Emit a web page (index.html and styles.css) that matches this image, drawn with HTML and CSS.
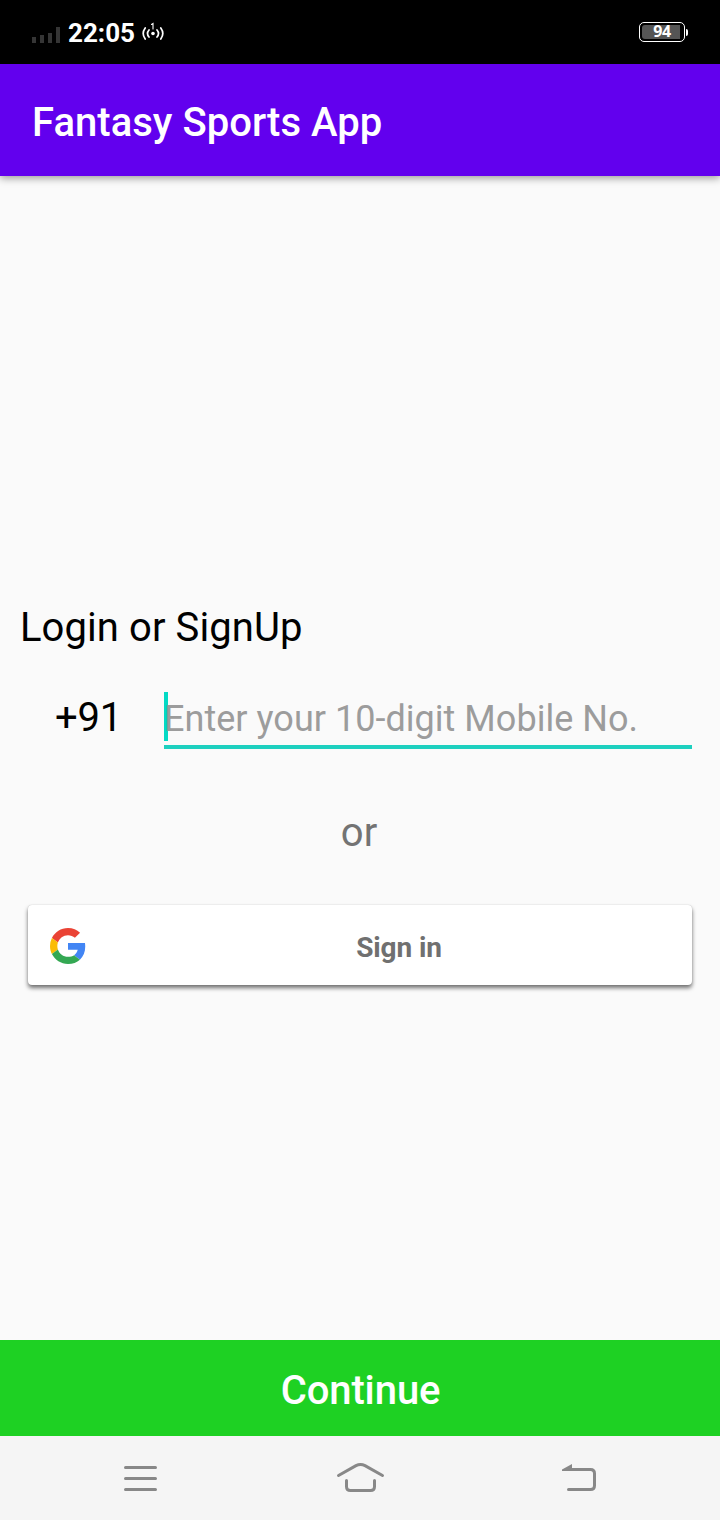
FILE: index.html
```html
<!DOCTYPE html>
<html lang="en">
<head>
<meta charset="utf-8">
<title>Fantasy Sports App</title>
<link rel="stylesheet" href="styles.css">
</head>
<body>
<div class="screen">
  <div class="status">
    <svg class="signal" width="28" height="16" viewBox="0 0 28 16" fill="#353535"><path d="M0 10h4v6H0zM8 8h4v8H8zM16 6h4v10h-4zM24 0h4v16h-4z"/></svg>
    <span class="time">22:05</span>
    <svg class="hotspot" width="22" height="20" viewBox="0 0 22 20" fill="none" stroke="#fff" stroke-width="1.700" stroke-linecap="round"><path d="M3.200 6Q-.8 11.500 3.200 17M7 8Q4 11.500 7 15M18.800 6Q22.800 11.500 18.800 17M15 8Q18 11.500 15 15"/><path d="M9.500 2.500l1.500-1v5.500" stroke-width="1.100"/><circle cx="11" cy="11.500" r="1.800" fill="#fff" stroke="none"/></svg>
    <div class="battery"><span class="charge">94</span></div>
  </div>
  <header class="appbar">Fantasy Sports App</header>
  <main class="content">
    <h1 class="heading">Login or SignUp</h1>
    <div class="phone">
      <span class="code">+91</span>
      <div class="field"><span class="caret"></span><span class="hint">Enter your 10-digit Mobile No.</span></div>
    </div>
    <div class="or">or</div>
    <div class="signin">
      <svg class="google" width="36" height="36" viewBox="0 0 48 48"><path fill="#EA4335" d="M24 9.500c3.540 0 6.710 1.220 9.210 3.600l6.850-6.850C35.900 2.380 30.470 0 24 0 14.620 0 6.510 5.380 2.560 13.220l7.980 6.190C12.430 13.720 17.740 9.500 24 9.500z"/><path fill="#4285F4" d="M46.980 24.550c0-1.570-.15-3.090-.38-4.550H24v9.020h12.940c-.58 2.960-2.260 5.480-4.780 7.180l7.730 6c4.510-4.180 7.090-10.360 7.090-17.650z"/><path fill="#FBBC05" d="M10.530 28.590A14.500 14.500 0 0 1 9.770 24c0-1.600.27-3.140.76-4.590l-7.980-6.190A23.900 23.900 0 0 0 0 24c0 3.880.92 7.540 2.560 10.780z"/><path fill="#34A853" d="M24 48c6.480 0 11.930-2.130 15.890-5.810l-7.730-6c-2.150 1.450-4.920 2.300-8.160 2.300-6.260 0-11.570-4.220-13.470-9.910l-7.980 6.190C6.510 42.620 14.620 48 24 48z"/></svg>
      <span class="signin-label">Sign in</span>
    </div>
  </main>
  <div class="continue">Continue</div>
  <nav class="navbar">
    <svg width="80" height="60" viewBox="0 0 80 60"><path d="M25.500 17.500h30M25.500 28.500h30M25.500 39.500h30"/></svg>
    <svg width="80" height="60" viewBox="0 0 80 60"><path d="M18.500 25.500L36 15.600Q40.500 13.300 45 15.600L62.500 25.500M26.500 30.500V36.500Q26.500 40.500 30.500 40.500H50.500Q54.500 40.500 54.500 36.500V30.500"/></svg>
    <svg width="80" height="60" viewBox="0 0 80 60"><path d="M28.500 39.500H50.500Q54.500 39.500 54.500 35.500V23.500Q54.500 19.500 50.500 19.500H26"/><path class="tip" d="M22 19.500L32 14V21H22z"/></svg>
  </nav>
</div>
</body>
</html>
```
FILE: styles.css
```css
* { box-sizing: border-box; }
body { margin: 0; font-family: Roboto, "Liberation Sans", sans-serif; background: #fafafa; }
.screen { display: flex; flex-direction: column; width: 720px; height: 1520px; overflow: hidden; }
.status { display: flex; height: 64px; padding: 0 32px; background: #000; color: #fff; }
.signal { margin-top: 27px; }
.time { margin: 18px 0 0 8px; font-size: 26px; line-height: 30px; font-weight: 700; }
.hotspot { margin: 22px 0 0 7px; }
.battery { width: 46px; height: 20px; margin: 22px 3px 0 auto; padding: 2px; border: 1px solid #fff; border-radius: 5px; position: relative; }
.battery::after { content: ""; position: absolute; left: 46px; top: 6px; width: 2px; height: 7px; background: #fff; border-radius: 0 2px 2px 0; }
.charge { display: block; width: 38px; height: 14px; padding-left: 2px; border-radius: 3px 0 0 3px; background: #555; font: 700 16px/12px "Noto Sans", sans-serif; letter-spacing: -.4px; text-align: center; }
.appbar { height: 112px; flex: none; padding: 3px 32px 0; background: #6200ee; color: #fff; font-size: 40px; line-height: 112px; font-weight: 500; letter-spacing: .03px; box-shadow: 0 2px 8px rgba(0,0,0,.4); z-index: 1; }
.content { flex: 1; padding: 428px 28px 0; }
.heading { margin: 0 0 0 -8px; font-size: 40px; line-height: 48px; font-weight: 400; letter-spacing: .08px; color: #000; }
.phone { display: flex; margin-top: 40px; height: 57px; }
.code { width: 136px; padding-left: 27px; font-size: 40px; line-height: 52px; letter-spacing: -.2px; color: #000; }
.field { flex: 1; display: flex; height: 57px; border-bottom: 4px solid #1dd0bf; }
.caret { width: 4px; height: 49px; background: #03dac5; }
.hint { margin-left: -4px; font-size: 36px; line-height: 54px; letter-spacing: .03px; color: #9c9c9c; white-space: nowrap; }
.or { margin-top: 60px; height: 48px; padding-right: 2px; font-size: 40px; line-height: 48px; text-align: center; color: #737373; }
.signin { display: flex; align-items: center; height: 80px; margin-top: 48px; padding-left: 22px; background: #fff; border-radius: 4px; box-shadow: 0 3px 4px rgba(0,0,0,.55), 0 0 1px rgba(0,0,0,.25); }
.google { margin-top: 2px; }
.signin-label { flex: 1; padding: 4px 0 0 20px; text-align: center; font-size: 28px; font-weight: 700; letter-spacing: -.1px; color: #707070; }
.continue { height: 96px; padding: 3px 0 0 1px; background: #1ed123; color: #fff; font-size: 40px; font-weight: 500; line-height: 96px; letter-spacing: -.1px; text-align: center; }
.navbar { display: flex; justify-content: space-between; height: 84px; padding: 14px 100px 0; background: #f5f5f5; }
.navbar svg { fill: none; stroke: #888; stroke-width: 3; stroke-linecap: round; stroke-linejoin: round; }
.navbar .tip { fill: #888; stroke: none; }
```
